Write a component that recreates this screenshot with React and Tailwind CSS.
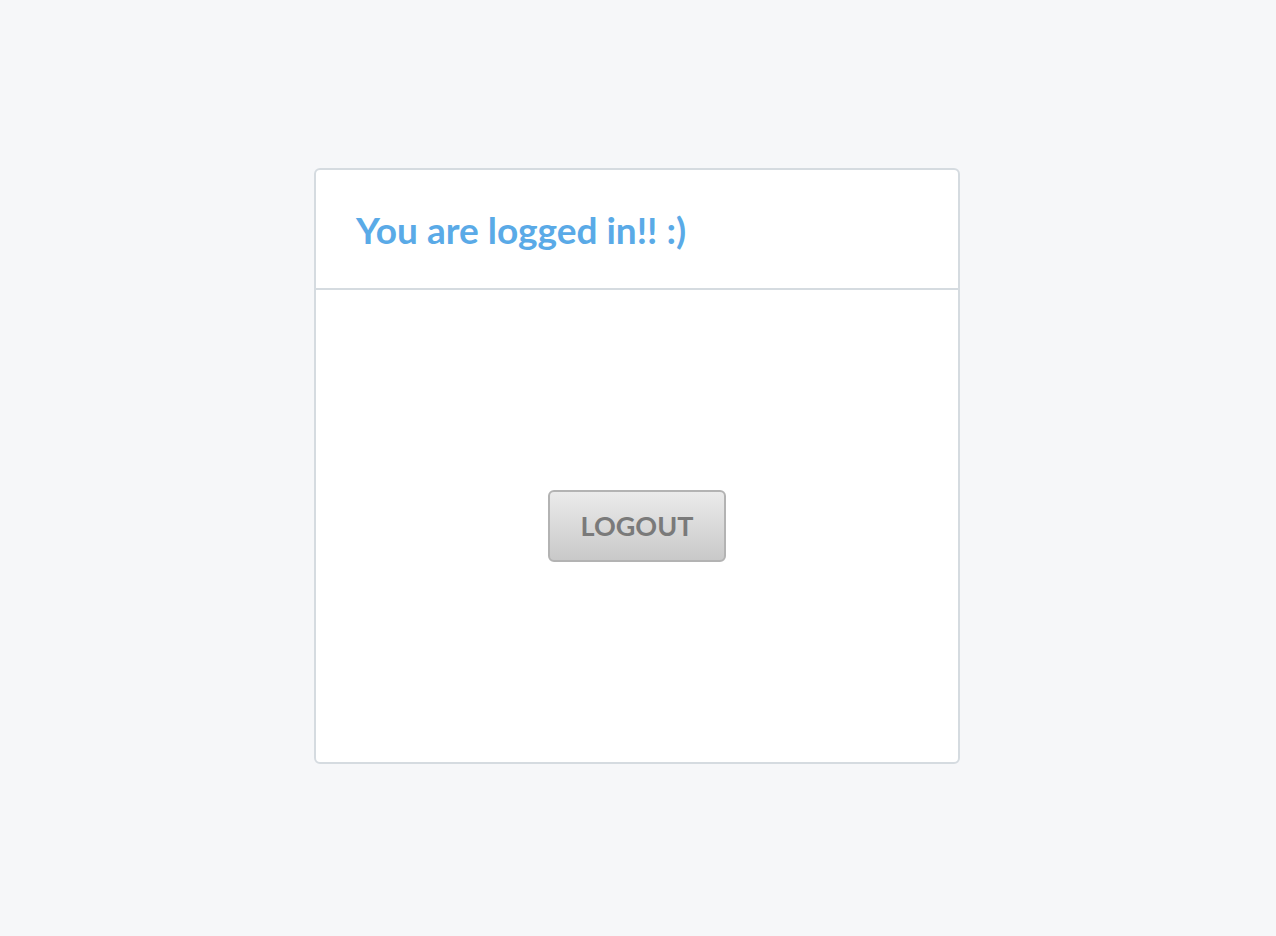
export default function App() {
  return (
    <div className="flex min-h-screen items-center justify-center bg-[#f6f7f9] pb-1 pr-0.5 font-['Lato','Liberation_Sans',sans-serif]">
      <div className="flex h-[596px] w-[646px] flex-col rounded-md border-2 border-[#d5dbe0] bg-white">
        <div className="flex h-[120px] items-center border-b-2 border-[#d5dbe0] px-[40px] pt-[1px]">
          <h1 className="text-[37px] font-bold leading-none text-[#5aaae7]">You are logged in!! :)</h1>
        </div>
        <div className="flex flex-1 items-center justify-center">
          <button
            type="button"
            className="h-[72px] w-[178px] rounded-md border-2 border-[#b3b3b3] bg-gradient-to-b from-[#ebebeb] to-[#c9c9c9] text-[27px] font-bold text-[#7a7a7a]"
          >
            LOGOUT
          </button>
        </div>
      </div>
    </div>
  );
}
